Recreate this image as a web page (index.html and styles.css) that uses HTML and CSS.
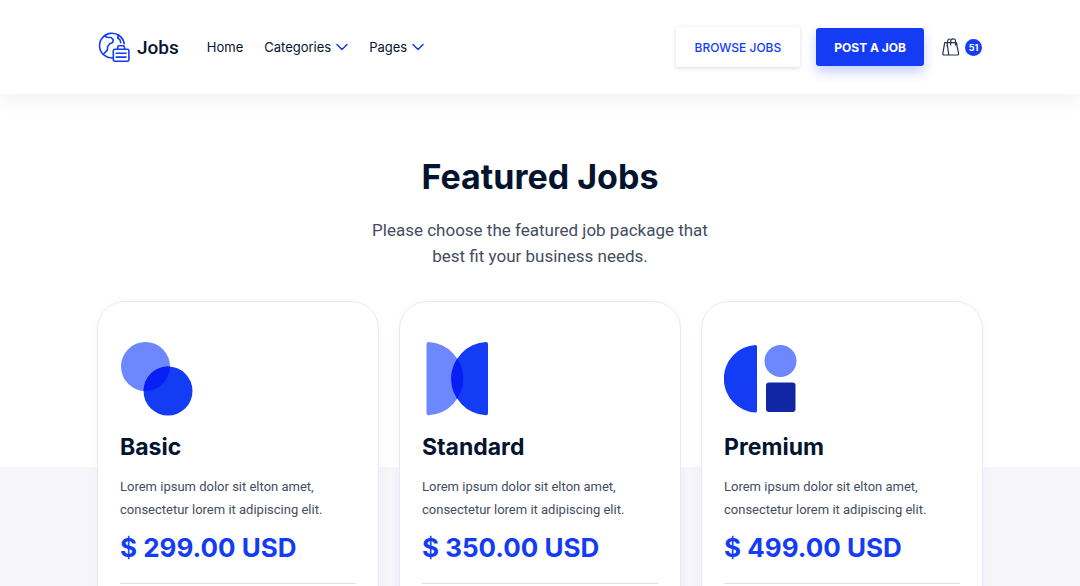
FILE: index.html
```html
<!DOCTYPE html>
<html lang="en">
<head>
<meta charset="utf-8">
<meta name="viewport" content="width=device-width, initial-scale=1">
<title>Jobs</title>
<link rel="stylesheet" href="styles.css">
</head>
<body>
<div class="page">
  <header class="header">
    <div class="container header-row">
      <a class="brand" href="#">
        <svg class="brand-icon" viewBox="0 0 32 32" aria-hidden="true">
          <path d="M15 27A12.4 12.4 0 1 1 26.200 12.800"/>
          <path d="M6.500 5l2.600 1.300 4 .2 2.200 2.200-.7 2.800-3 1.400-2 2.800-.2 3.400-3.700 3.600M20.500 4l-.8 3 2.200 1.600.8 3"/>
          <rect x="15.300" y="18.200" width="15.600" height="12" rx="1.500"/>
          <path d="M19.700 18v-1.600q0-1.600 1.600-1.600h3.600q1.600 0 1.600 1.600v1.600M18.200 22.300h9.800M18.200 26.100h9.800"/>
        </svg>
        <span>Jobs</span>
      </a>
      <nav class="nav">
        <a href="#">Home</a>
        <a href="#">Categories <svg class="chevron" viewBox="0 0 12 8" aria-hidden="true"><path d="M1 1.5l5 5 5-5"/></svg></a>
        <a href="#">Pages <svg class="chevron" viewBox="0 0 12 8" aria-hidden="true"><path d="M1 1.5l5 5 5-5"/></svg></a>
      </nav>
      <div class="actions">
        <button class="button button-light" type="button">BROWSE JOBS</button>
        <button class="button button-primary" type="button">POST A JOB</button>
        <a class="cart" href="#" aria-label="Cart, 51 items">
          <svg class="bag" viewBox="0 0 18 18" aria-hidden="true">
            <path d="M2.7 4.7h11.7l2.2 11q.1 1.3-1.2 1.3H2q-1.3 0-1.2-1.3zM5 4.7L6.8 17M5 8l.6-5q.4-2 2.3-2M8.7 7V3.3q0-2.5 2.4-2.5t2.4 2.5V7"/>
          </svg>
          <span class="cart-count">51</span>
        </a>
      </div>
    </div>
  </header>
  <main class="featured">
    <div class="container">
      <div class="intro">
        <h1>Featured Jobs</h1>
        <p>Please choose the featured job package that<br>best fit your business needs.</p>
      </div>
      <div class="cards">
        <article class="card">
          <svg class="card-art" viewBox="0 0 76 76" aria-hidden="true">
            <circle cx="25.5" cy="25.5" r="24.5" fill="#6d88ff"/>
            <circle cx="48" cy="50" r="24.5" fill="#143cf5"/>
            <path d="M23.6 49.9A24.5 24.5 0 0 1 49.9 25.6 24.5 24.5 0 0 1 23.6 49.9z" fill="#071ff5"/>
          </svg>
          <h2>Basic</h2>
          <p>Lorem ipsum dolor sit elton amet,<br>consectetur lorem it adipiscing elit.</p>
          <div class="price">$ 299.00 USD</div>
          <hr>
        </article>
        <article class="card">
          <svg class="card-art" viewBox="0 0 76 76" aria-hidden="true">
            <defs><clipPath id="left-half"><path d="M4.5 3q0-2 2-2A36.7 36.7 0 0 1 6.5 74.3q-2 0-2-2z"/></clipPath></defs>
            <path d="M4.5 3q0-2 2-2A36.7 36.7 0 0 1 6.5 74.3q-2 0-2-2z" fill="#6d88ff"/>
            <path d="M66 3q0-2-2-2A36.7 36.7 0 0 0 64 74.3q2 0 2-2z" fill="#143cf5"/>
            <path d="M66 3q0-2-2-2A36.7 36.7 0 0 0 64 74.3q2 0 2-2z" fill="#071ff5" clip-path="url(#left-half)"/>
          </svg>
          <h2>Standard</h2>
          <p>Lorem ipsum dolor sit elton amet,<br>consectetur lorem it adipiscing elit.</p>
          <div class="price">$ 350.00 USD</div>
          <hr>
        </article>
        <article class="card">
          <svg class="card-art" viewBox="0 0 76 76" aria-hidden="true">
            <path d="M33 5.5q0-1.5-1.5-1.5A33.5 33.8 0 0 0 31.5 71.5q1.5 0 1.5-1.5z" fill="#143cf5"/>
            <circle cx="56.5" cy="20" r="16" fill="#6d88ff"/>
            <rect x="42" y="41.5" width="29.5" height="29.5" rx="3" fill="#1026a5"/>
          </svg>
          <h2>Premium</h2>
          <p>Lorem ipsum dolor sit elton amet,<br>consectetur lorem it adipiscing elit.</p>
          <div class="price">$ 499.00 USD</div>
          <hr>
        </article>
      </div>
    </div>
  </main>
</div>
</body>
</html>
```
FILE: styles.css
```css
* { box-sizing: border-box; }
body {
  margin: 0;
  color: #04142f;
  background: #fff;
  font-family: Roboto, "Liberation Sans", sans-serif;
}
h1, h2, p { margin: 0; }
h1, h2, .price, .nav, .button, .cart-count { font-family: Inter, "Liberation Sans", sans-serif; }
a { color: inherit; text-decoration: none; }
.page { height: 100vh; overflow: hidden; }
.container { max-width: 932px; margin: 0 auto; padding: 0 24px; }

.header {
  position: relative;
  padding: 27px 0;
  background: #fff;
  box-shadow: 0 4px 20px rgba(15, 25, 60, 0.07);
}
.header-row { display: flex; align-items: center; }
.brand { display: flex; align-items: center; gap: 7px; font-size: 19px; font-weight: 500; }
.brand-icon { width: 32px; height: 32px; fill: none; stroke: #143cf5; stroke-width: 1.6; stroke-linecap: round; stroke-linejoin: round; }
.nav { display: flex; gap: 21px; margin-left: 28px; font-size: 13px; }
.nav a { display: flex; align-items: center; gap: 5px; }
.chevron { width: 12px; height: 8px; fill: none; stroke: #143cf5; stroke-width: 1.5; stroke-linecap: round; stroke-linejoin: round; }
.actions { display: flex; align-items: center; margin-left: auto; gap: 16px; }
.button {
  height: 38px;
  padding: 0 19px;
  border: 0;
  border-radius: 3px;
  font-size: 12px;
}
.button-light { height: 40px; color: #143cf5; background: #fff; box-shadow: 0 1px 4px rgba(20, 30, 80, 0.16); font-weight: 500; }
.button-primary { padding: 0 18px; color: #fff; background: #143cf5; font-weight: 700; box-shadow: 0 6px 12px rgba(20, 60, 245, 0.24); }
.cart { display: flex; align-items: center; gap: 5px; margin-left: 2px; }
.bag { width: 18px; height: 18px; fill: none; stroke: #26334a; stroke-width: 1.2; stroke-linecap: round; stroke-linejoin: round; }
.cart-count {
  width: 17px;
  border-radius: 50%;
  color: #fff;
  background: #143cf5;
  font-size: 9px;
  font-weight: 700;
  line-height: 17px;
  text-align: center;
}

.featured { padding-top: 59px; background: linear-gradient(#fff 373px, #f5f5fa 373px); }
.intro { text-align: center; }
.intro h1 { font-size: 34px; font-weight: 700; line-height: 48px; }
.intro p { margin-top: 16px; color: #434d5f; font-size: 17px; line-height: 26px; }
.cards { display: grid; grid-template-columns: repeat(3, 1fr); gap: 20px; margin: 32px -1px 0; }
.card {
  padding: 39px 22px 48px;
  border: 1px solid #e9e9f5;
  border-radius: 28px 28px 0 0;
  background: #fff;
  box-shadow: 0 2px 12px rgba(20, 40, 160, 0.03);
}
.card-art { display: block; width: 76px; height: 76px; }
.card h2 { margin-top: 14px; font-size: 23px; font-weight: 700; line-height: 32px; }
.card p { margin-top: 12px; color: #434d5f; font-size: 13px; line-height: 23px; white-space: nowrap; }
.price { margin-top: 9px; color: #143cf5; font-size: 26px; font-weight: 700; line-height: 36px; white-space: nowrap; }
.card hr { height: 1px; margin: 17px 0 0; border: 0; background: #dfe0e6; }
```
